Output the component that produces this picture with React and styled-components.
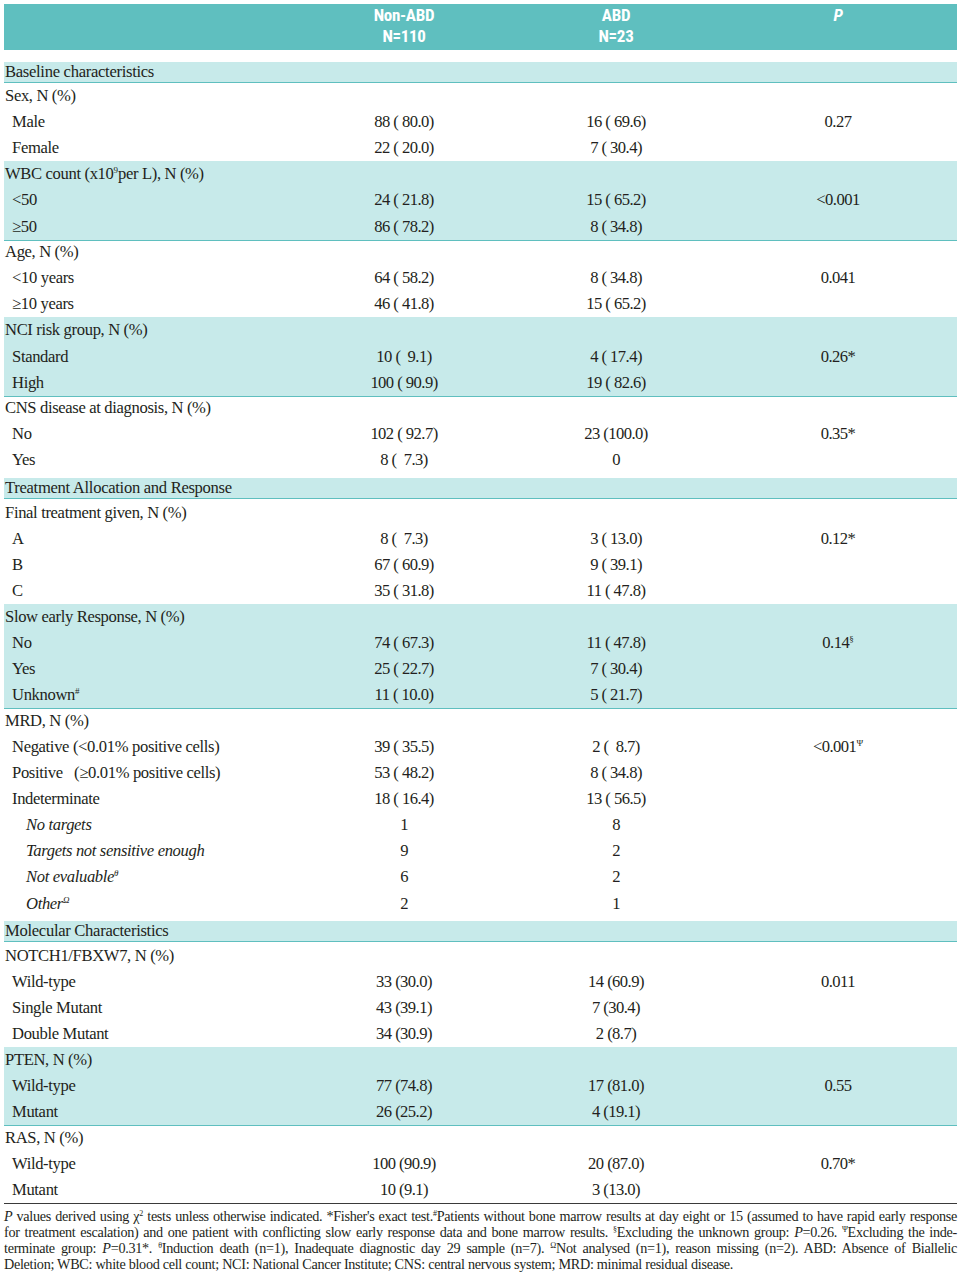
import React from 'react';
import styled, { createGlobalStyle } from 'styled-components';

const GlobalStyle = createGlobalStyle`
  html, body {
    margin: 0;
    padding: 0;
    background: #ffffff;
  }
  body {
    font-family: "Liberation Serif", "DejaVu Serif", serif;
    color: #231f20;
  }
`;

const TEAL = '#5fbfbf';
const BAND = '#c7eaea';

const Page = styled.div`
  width: 953px;
  padding: 4px 0 0 4px;
`;

const HeadRow = styled.div`
  display: grid;
  grid-template-columns: 296px 208px 216px 1fr;
  padding-right: 5px;
  height: 46px;
  background: ${TEAL};
  color: #ffffff;
  font-family: "Liberation Sans Narrow", "Roboto Condensed", "Liberation Sans", sans-serif;
  font-weight: 700;
  font-size: 17px;
  line-height: 21px;
  letter-spacing: -0.3px;
`;

const HeadCell = styled.div`
  text-align: center;
  padding-top: 1px;
  font-style: ${p => (p.italic ? 'italic' : 'normal')};
`;

const Spacer = styled.div`
  height: 7px;
`;

const Section = styled.div`
  height: 26.1px;
  padding-top: 4.5px;
  box-sizing: border-box;
`;

const SectionBand = styled.div`
  height: 20px;
  background: ${BAND};
  border-bottom: 1.5px solid ${TEAL};
  font-size: 16.6px;
  line-height: 20px;
  letter-spacing: -0.3px;
  padding-left: 1px;
`;

const Group = styled.div`
  background: ${p => (p.band ? BAND : 'transparent')};
  border-bottom: ${p =>
    p.last ? '1px solid #3a3a3a' : p.band ? `1.5px solid ${TEAL}` : 'none'};
  margin-bottom: ${p => (p.band ? '-1.5px' : '0')};
  position: relative;
`;

const Row = styled.div`
  display: grid;
  grid-template-columns: 296px 208px 216px 1fr;
  padding-right: 5px;
  height: 26.1px;
  line-height: 26.1px;
  font-size: 16.6px;
  letter-spacing: -0.35px;
`;

const Label = styled.div`
  padding-left: ${p => (p.indent === 2 ? 22 : p.indent === 1 ? 8 : 1)}px;
  font-style: ${p => (p.indent === 2 ? 'italic' : 'normal')};
  white-space: pre;
`;

const Value = styled.div`
  text-align: center;
  white-space: pre;
  letter-spacing: -0.55px;
`;

const Sup = styled.sup`
  font-size: 9px;
  line-height: 0;
  vertical-align: 6px;
  letter-spacing: 0;
`;

const Note = styled.div`
  margin-top: 4px;
  font-size: 14.2px;
  line-height: 16px;
  letter-spacing: -0.3px;
`;

const NoteLine = styled.span`
  display: block;
  white-space: nowrap;
  text-align: ${p => (p.last ? 'left' : 'justify')};
  text-align-last: ${p => (p.last ? 'left' : 'justify')};
`;

const NoteSup = styled.sup`
  font-size: 8px;
  line-height: 0;
  vertical-align: 5px;
`;

const groups = [
  { section: 'Baseline characteristics' },
  {
    rows: [
      { label: 'Sex, N (%)' },
      { label: 'Male', indent: 1, a: '88 ( 80.0)', b: '16 ( 69.6)', p: '0.27' },
      { label: 'Female', indent: 1, a: '22 ( 20.0)', b: '7 ( 30.4)' },
    ],
  },
  {
    band: true,
    rows: [
      { label: <>WBC count (x10<Sup>9</Sup>per L), N (%)</> },
      { label: '<50', indent: 1, a: '24 ( 21.8)', b: '15 ( 65.2)', p: '<0.001' },
      { label: '≥50', indent: 1, a: '86 ( 78.2)', b: '8 ( 34.8)' },
    ],
  },
  {
    rows: [
      { label: 'Age, N (%)' },
      { label: '<10 years', indent: 1, a: '64 ( 58.2)', b: '8 ( 34.8)', p: '0.041' },
      { label: '≥10 years', indent: 1, a: '46 ( 41.8)', b: '15 ( 65.2)' },
    ],
  },
  {
    band: true,
    rows: [
      { label: 'NCI risk group, N (%)' },
      { label: 'Standard', indent: 1, a: '10 (  9.1)', b: '4 ( 17.4)', p: '0.26*' },
      { label: 'High', indent: 1, a: '100 ( 90.9)', b: '19 ( 82.6)' },
    ],
  },
  {
    rows: [
      { label: 'CNS disease at diagnosis, N (%)' },
      { label: 'No', indent: 1, a: '102 ( 92.7)', b: '23 (100.0)', p: '0.35*' },
      { label: 'Yes', indent: 1, a: '8 (  7.3)', b: '0' },
    ],
  },
  { section: 'Treatment Allocation and Response' },
  {
    rows: [
      { label: 'Final treatment given, N (%)' },
      { label: 'A', indent: 1, a: '8 (  7.3)', b: '3 ( 13.0)', p: '0.12*' },
      { label: 'B', indent: 1, a: '67 ( 60.9)', b: '9 ( 39.1)' },
      { label: 'C', indent: 1, a: '35 ( 31.8)', b: '11 ( 47.8)' },
    ],
  },
  {
    band: true,
    rows: [
      { label: 'Slow early Response, N (%)' },
      { label: 'No', indent: 1, a: '74 ( 67.3)', b: '11 ( 47.8)', p: <>0.14<Sup>§</Sup></> },
      { label: 'Yes', indent: 1, a: '25 ( 22.7)', b: '7 ( 30.4)' },
      { label: <>Unknown<Sup>#</Sup></>, indent: 1, a: '11 ( 10.0)', b: '5 ( 21.7)' },
    ],
  },
  {
    rows: [
      { label: 'MRD, N (%)' },
      { label: 'Negative (<0.01% positive cells)', indent: 1, a: '39 ( 35.5)', b: '2 (  8.7)', p: <>&lt;0.001<Sup>Ψ</Sup></> },
      { label: 'Positive   (≥0.01% positive cells)', indent: 1, a: '53 ( 48.2)', b: '8 ( 34.8)' },
      { label: 'Indeterminate', indent: 1, a: '18 ( 16.4)', b: '13 ( 56.5)' },
      { label: 'No targets', indent: 2, a: '1', b: '8' },
      { label: 'Targets not sensitive enough', indent: 2, a: '9', b: '2' },
      { label: <>Not evaluable<Sup>θ</Sup></>, indent: 2, a: '6', b: '2' },
      { label: <>Other<Sup>Ω</Sup></>, indent: 2, a: '2', b: '1' },
    ],
  },
  { section: 'Molecular Characteristics' },
  {
    rows: [
      { label: 'NOTCH1/FBXW7, N (%)' },
      { label: 'Wild-type', indent: 1, a: '33 (30.0)', b: '14 (60.9)', p: '0.011' },
      { label: 'Single Mutant', indent: 1, a: '43 (39.1)', b: '7 (30.4)' },
      { label: 'Double Mutant', indent: 1, a: '34 (30.9)', b: '2 (8.7)' },
    ],
  },
  {
    band: true,
    rows: [
      { label: 'PTEN, N (%)' },
      { label: 'Wild-type', indent: 1, a: '77 (74.8)', b: '17 (81.0)', p: '0.55' },
      { label: 'Mutant', indent: 1, a: '26 (25.2)', b: '4 (19.1)' },
    ],
  },
  {
    last: true,
    rows: [
      { label: 'RAS, N (%)' },
      { label: 'Wild-type', indent: 1, a: '100 (90.9)', b: '20 (87.0)', p: '0.70*' },
      { label: 'Mutant', indent: 1, a: '10 (9.1)', b: '3 (13.0)' },
    ],
  },
];

const App = () => {
  return (
    <>
      <GlobalStyle />
      <Page>
        <HeadRow>
          <div />
          <HeadCell>Non-ABD<br />N=110</HeadCell>
          <HeadCell>ABD<br />N=23</HeadCell>
          <HeadCell italic>P</HeadCell>
        </HeadRow>
        <Spacer />
        {groups.map((g, i) =>
          g.section ? (
            <Section key={i}>
              <SectionBand>{g.section}</SectionBand>
            </Section>
          ) : (
            <Group key={i} band={g.band} last={g.last}>
              {g.rows.map((r, j) => (
                <Row key={j}>
                  <Label indent={r.indent}>{r.label}</Label>
                  <Value>{r.a}</Value>
                  <Value>{r.b}</Value>
                  <Value>{r.p}</Value>
                </Row>
              ))}
            </Group>
          )
        )}
        <Note>
          <NoteLine>
            <i>P</i> values derived using χ<NoteSup>2</NoteSup> tests unless otherwise indicated. *Fisher's exact test.<NoteSup>#</NoteSup>Patients without bone marrow results at day eight or 15 (assumed to have rapid early response
          </NoteLine>
          <NoteLine>
            for treatment escalation) and one patient with conflicting slow early response data and bone marrow results. <NoteSup>§</NoteSup>Excluding the unknown group: <i>P</i>=0.26. <NoteSup>Ψ</NoteSup>Excluding the inde-
          </NoteLine>
          <NoteLine>
            terminate group: <i>P</i>=0.31*. <NoteSup>θ</NoteSup>Induction death (n=1), Inadequate diagnostic day 29 sample (n=7). <NoteSup>Ω</NoteSup>Not analysed (n=1), reason missing (n=2). ABD: Absence of Biallelic
          </NoteLine>
          <NoteLine last>
            Deletion; WBC: white blood cell count; NCI: National Cancer Institute; CNS: central nervous system; MRD: minimal residual disease.
          </NoteLine>
        </Note>
      </Page>
    </>
  );
};

export default App;
